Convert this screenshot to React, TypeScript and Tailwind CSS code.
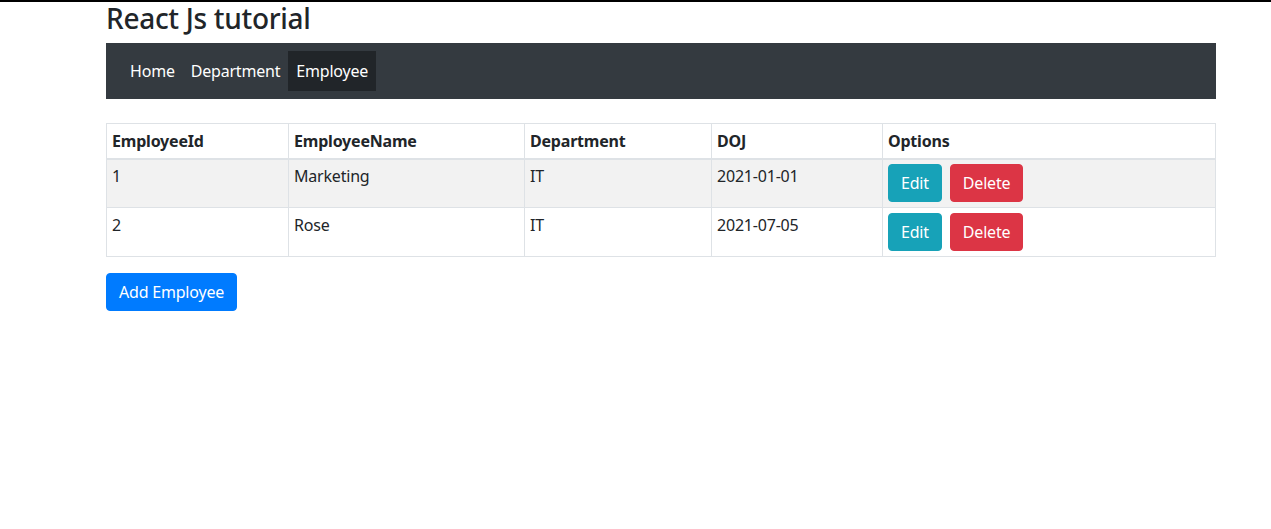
import React from "react";

const employees = [
  { id: 1, name: "Marketing", department: "IT", doj: "2021-01-01" },
  { id: 2, name: "Rose", department: "IT", doj: "2021-07-05" },
];

export default function App() {
  return (
    <div className="min-h-[529px] bg-white border-t-2 border-black text-[#212529] text-base leading-6 tracking-[-0.2px] font-['Segoe_UI','Noto_Sans',sans-serif]">
      <div className="ml-[106px] w-[1110px]">
        <h3 className="mb-[7px] text-[28px] font-medium leading-[1.2] tracking-[-0.3px]">React Js tutorial</h3>

        {/* navbar */}
        <nav className="flex h-14 items-center bg-[#343a40] px-4 py-2">
          <ul className="flex">
            <li>
              <a className="block px-2 py-2 text-white">Home</a>
            </li>
            <li>
              <a className="block px-2 py-2 text-white">Department</a>
            </li>
            <li>
              <a className="block bg-[#212529] px-2 py-2 text-white">Employee</a>
            </li>
          </ul>
        </nav>

        <table className="mt-6 mb-4 w-full border-collapse border border-[#dee2e6]">
          <thead>
            <tr>
              <th className="w-[182px] border border-b-2 border-[#dee2e6] px-[5px] py-[5px] text-left font-bold">EmployeeId</th>
              <th className="w-[236px] border border-b-2 border-[#dee2e6] px-[5px] py-[5px] text-left font-bold">EmployeeName</th>
              <th className="w-[187px] border border-b-2 border-[#dee2e6] px-[5px] py-[5px] text-left font-bold">Department</th>
              <th className="w-[171px] border border-b-2 border-[#dee2e6] px-[5px] py-[5px] text-left font-bold">DOJ</th>
              <th className="border border-b-2 border-[#dee2e6] px-[5px] py-[5px] text-left font-bold">Options</th>
            </tr>
          </thead>
          <tbody>
            {employees.map((emp, i) => (
              <tr key={emp.id} className={i % 2 === 0 ? "bg-[#f2f2f2]" : ""}>
                <td className="border border-[#dee2e6] px-[5px] py-[4.8px] align-top">{emp.id}</td>
                <td className="border border-[#dee2e6] px-[5px] py-[4.8px] align-top">{emp.name}</td>
                <td className="border border-[#dee2e6] px-[5px] py-[4.8px] align-top">{emp.department}</td>
                <td className="border border-[#dee2e6] px-[5px] py-[4.8px] align-top">{emp.doj}</td>
                <td className="border border-[#dee2e6] px-[5px] py-[4.8px] align-top">
                  <div className="flex gap-2">
                    <button className="rounded border border-[#17a2b8] bg-[#17a2b8] px-3 py-1.5 text-white">Edit</button>
                    <button className="rounded border border-[#dc3545] bg-[#dc3545] px-3 py-1.5 text-white">Delete</button>
                  </div>
                </td>
              </tr>
            ))}
          </tbody>
        </table>

        <button className="rounded border border-[#007bff] bg-[#007bff] px-3 py-1.5 text-white">Add Employee</button>
      </div>
    </div>
  );
}
